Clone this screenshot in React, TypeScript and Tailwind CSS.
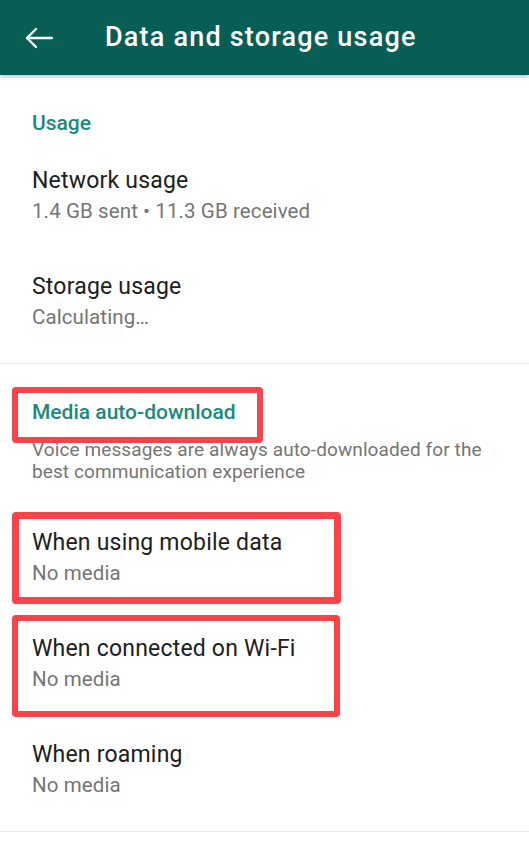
import React from "react";

const rows1 = [
  { title: "Network usage", sub: "1.4 GB sent \u2022 11.3 GB received" },
  { title: "Storage usage", sub: "Calculating\u2026" },
];

const rows2 = [
  { title: "When using mobile data", sub: "No media" },
  { title: "When connected on Wi-Fi", sub: "No media" },
  { title: "When roaming", sub: "No media" },
];

const Row = ({ title, sub }: { title: string; sub: string }) => (
  <div className="pl-[32px] py-[25px]">
    <div className="text-[23px] leading-[28px] tracking-[0.2px] text-[#202020]">{title}</div>
    <div className="mt-[4px] text-[20.5px] leading-[24px] tracking-[0.1px] text-[#757575]">{sub}</div>
  </div>
);

const SectionTitle = ({ children }: { children: React.ReactNode }) => (
  <div className="pl-[32px] pt-[36px] text-[21px] leading-[24px] font-medium text-[#1b8a7b]">
    {children}
  </div>
);

export default function App() {
  return (
    <div className="relative min-h-screen bg-white font-['Roboto',sans-serif]">
      {/* Toolbar */}
      <div className="h-[75px] bg-[#075e54] flex items-center shadow-[0_2px_4px_rgba(0,0,0,0.25)] relative z-10">
        <svg className="ml-[25px]" width="28" height="22" viewBox="0 0 28 22" fill="none" stroke="white" strokeWidth="2.4" strokeLinecap="round" strokeLinejoin="round">
          <path d="M27 11H2.5" />
          <path d="M11 2L2 11l9 9" />
        </svg>
        <h1 className="ml-[52px] text-white text-[27px] font-medium tracking-[1.2px]">Data and storage usage</h1>
      </div>

      {/* Usage */}
      <SectionTitle>Usage</SectionTitle>
      <div className="mt-[7px]">
        {rows1.map((r) => (
          <Row key={r.title} {...r} />
        ))}
      </div>
      <div className="mt-[9px] h-px bg-[#e9e9e9]" />

      {/* Media auto-download */}
      <SectionTitle>Media auto-download</SectionTitle>
      <p className="pl-[32px] pr-[20px] mt-[15px] text-[19px] leading-[22px] tracking-[0.1px] text-[#757575]">
        Voice messages are always auto-downloaded for the best communication experience
      </p>
      <div className="mt-[21px]">
        {rows2.map((r) => (
          <Row key={r.title} {...r} />
        ))}
      </div>
      <div className="mt-[9px] h-px bg-[#e9e9e9]" />

      {/* Annotation boxes */}
      <div className="absolute left-[12px] top-[387px] w-[251px] h-[56px] border-[6px] border-[#fb4349] rounded-[4px]" />
      <div className="absolute left-[12px] top-[512px] w-[329px] h-[92px] border-[7px] border-[#fb4349] rounded-[4px]" />
      <div className="absolute left-[12px] top-[615px] w-[328px] h-[102px] border-[6px] border-[#fb4349] rounded-[4px]" />
    </div>
  );
}
